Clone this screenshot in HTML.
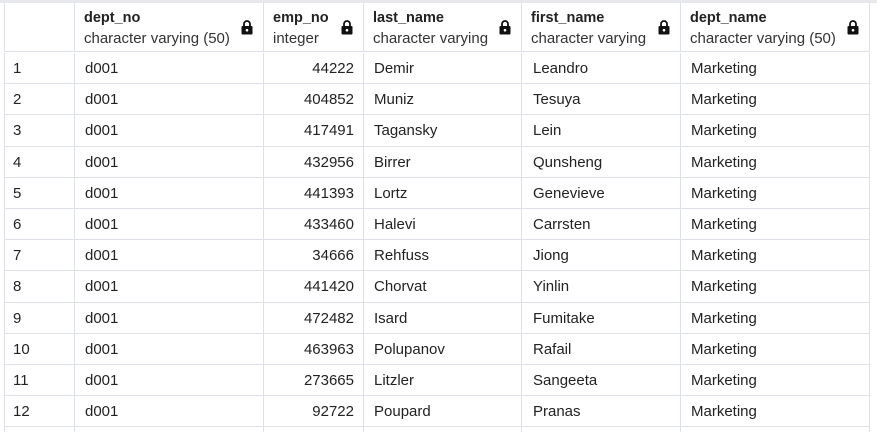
<!DOCTYPE html>
<html style="overflow:hidden;height:432px"><head><style>
body{margin:0;width:877px;height:432px;overflow:hidden;background:#fff;font-family:"Liberation Sans",sans-serif;font-size:15px;color:#222;position:relative}
.top{position:absolute;left:0;top:0;width:877px;height:3px;background:#e6e8ee}
.h{position:absolute;top:3px;height:49px;border-right:1px solid #dde0e6;border-bottom:1px solid #dde0e6;box-sizing:border-box}
.h b{position:absolute;left:9px;top:7px;font-weight:bold;font-size:14.5px;color:#222}
.h i{position:absolute;left:9px;top:27px;font-style:normal;font-size:15px;color:#333}
.lk{position:absolute;right:10px;top:17px}
.r{position:absolute;left:4px;width:866px;height:31.2px;border-bottom:1px solid #dde0e6;box-sizing:border-box}
.c{position:absolute;top:0;height:100%;border-right:1px solid #dde0e6;box-sizing:border-box;line-height:32px;white-space:nowrap}
</style></head><body>
<div class="top"></div>
<div class="h" style="left:4px;width:71px;border-left:1px solid #dde0e6"></div>
<div class="h" style="left:75px;width:189px"><b>dept_no</b><i>character varying (50)</i><svg class="lk" width="12" height="15" viewBox="0 0 12 15"><path d="M3 6V4a3 3 0 0 1 6 0v2" fill="none" stroke="#111" stroke-width="1.8"/><rect x="0.5" y="6" width="11" height="8.5" rx="1" fill="#111"/><circle cx="6" cy="10.2" r="1.3" fill="#fff"/></svg></div>
<div class="h" style="left:264px;width:100px"><b>emp_no</b><i>integer</i><svg class="lk" width="12" height="15" viewBox="0 0 12 15"><path d="M3 6V4a3 3 0 0 1 6 0v2" fill="none" stroke="#111" stroke-width="1.8"/><rect x="0.5" y="6" width="11" height="8.5" rx="1" fill="#111"/><circle cx="6" cy="10.2" r="1.3" fill="#fff"/></svg></div>
<div class="h" style="left:364px;width:158px"><b>last_name</b><i>character varying</i><svg class="lk" width="12" height="15" viewBox="0 0 12 15"><path d="M3 6V4a3 3 0 0 1 6 0v2" fill="none" stroke="#111" stroke-width="1.8"/><rect x="0.5" y="6" width="11" height="8.5" rx="1" fill="#111"/><circle cx="6" cy="10.2" r="1.3" fill="#fff"/></svg></div>
<div class="h" style="left:522px;width:159px"><b>first_name</b><i>character varying</i><svg class="lk" width="12" height="15" viewBox="0 0 12 15"><path d="M3 6V4a3 3 0 0 1 6 0v2" fill="none" stroke="#111" stroke-width="1.8"/><rect x="0.5" y="6" width="11" height="8.5" rx="1" fill="#111"/><circle cx="6" cy="10.2" r="1.3" fill="#fff"/></svg></div>
<div class="h" style="left:681px;width:189px"><b>dept_name</b><i>character varying (50)</i><svg class="lk" width="12" height="15" viewBox="0 0 12 15"><path d="M3 6V4a3 3 0 0 1 6 0v2" fill="none" stroke="#111" stroke-width="1.8"/><rect x="0.5" y="6" width="11" height="8.5" rx="1" fill="#111"/><circle cx="6" cy="10.2" r="1.3" fill="#fff"/></svg></div>
<div class="r" style="top:53px"><div class="c" style="left:0;width:71px;border-left:1px solid #dde0e6;padding-left:8px">1</div><div class="c" style="left:71px;width:189px;padding-left:10px">d001</div><div class="c" style="left:260px;width:100px;text-align:right;padding-right:9px">44222</div><div class="c" style="left:360px;width:158px;padding-left:10px">Demir</div><div class="c" style="left:518px;width:159px;padding-left:11px">Leandro</div><div class="c" style="left:677px;width:189px;padding-left:10px">Marketing</div></div>
<div class="r" style="top:84.2px"><div class="c" style="left:0;width:71px;border-left:1px solid #dde0e6;padding-left:8px">2</div><div class="c" style="left:71px;width:189px;padding-left:10px">d001</div><div class="c" style="left:260px;width:100px;text-align:right;padding-right:9px">404852</div><div class="c" style="left:360px;width:158px;padding-left:10px">Muniz</div><div class="c" style="left:518px;width:159px;padding-left:11px">Tesuya</div><div class="c" style="left:677px;width:189px;padding-left:10px">Marketing</div></div>
<div class="r" style="top:115.4px"><div class="c" style="left:0;width:71px;border-left:1px solid #dde0e6;padding-left:8px">3</div><div class="c" style="left:71px;width:189px;padding-left:10px">d001</div><div class="c" style="left:260px;width:100px;text-align:right;padding-right:9px">417491</div><div class="c" style="left:360px;width:158px;padding-left:10px">Tagansky</div><div class="c" style="left:518px;width:159px;padding-left:11px">Lein</div><div class="c" style="left:677px;width:189px;padding-left:10px">Marketing</div></div>
<div class="r" style="top:146.6px"><div class="c" style="left:0;width:71px;border-left:1px solid #dde0e6;padding-left:8px">4</div><div class="c" style="left:71px;width:189px;padding-left:10px">d001</div><div class="c" style="left:260px;width:100px;text-align:right;padding-right:9px">432956</div><div class="c" style="left:360px;width:158px;padding-left:10px">Birrer</div><div class="c" style="left:518px;width:159px;padding-left:11px">Qunsheng</div><div class="c" style="left:677px;width:189px;padding-left:10px">Marketing</div></div>
<div class="r" style="top:177.8px"><div class="c" style="left:0;width:71px;border-left:1px solid #dde0e6;padding-left:8px">5</div><div class="c" style="left:71px;width:189px;padding-left:10px">d001</div><div class="c" style="left:260px;width:100px;text-align:right;padding-right:9px">441393</div><div class="c" style="left:360px;width:158px;padding-left:10px">Lortz</div><div class="c" style="left:518px;width:159px;padding-left:11px">Genevieve</div><div class="c" style="left:677px;width:189px;padding-left:10px">Marketing</div></div>
<div class="r" style="top:209px"><div class="c" style="left:0;width:71px;border-left:1px solid #dde0e6;padding-left:8px">6</div><div class="c" style="left:71px;width:189px;padding-left:10px">d001</div><div class="c" style="left:260px;width:100px;text-align:right;padding-right:9px">433460</div><div class="c" style="left:360px;width:158px;padding-left:10px">Halevi</div><div class="c" style="left:518px;width:159px;padding-left:11px">Carrsten</div><div class="c" style="left:677px;width:189px;padding-left:10px">Marketing</div></div>
<div class="r" style="top:240.2px"><div class="c" style="left:0;width:71px;border-left:1px solid #dde0e6;padding-left:8px">7</div><div class="c" style="left:71px;width:189px;padding-left:10px">d001</div><div class="c" style="left:260px;width:100px;text-align:right;padding-right:9px">34666</div><div class="c" style="left:360px;width:158px;padding-left:10px">Rehfuss</div><div class="c" style="left:518px;width:159px;padding-left:11px">Jiong</div><div class="c" style="left:677px;width:189px;padding-left:10px">Marketing</div></div>
<div class="r" style="top:271.4px"><div class="c" style="left:0;width:71px;border-left:1px solid #dde0e6;padding-left:8px">8</div><div class="c" style="left:71px;width:189px;padding-left:10px">d001</div><div class="c" style="left:260px;width:100px;text-align:right;padding-right:9px">441420</div><div class="c" style="left:360px;width:158px;padding-left:10px">Chorvat</div><div class="c" style="left:518px;width:159px;padding-left:11px">Yinlin</div><div class="c" style="left:677px;width:189px;padding-left:10px">Marketing</div></div>
<div class="r" style="top:302.6px"><div class="c" style="left:0;width:71px;border-left:1px solid #dde0e6;padding-left:8px">9</div><div class="c" style="left:71px;width:189px;padding-left:10px">d001</div><div class="c" style="left:260px;width:100px;text-align:right;padding-right:9px">472482</div><div class="c" style="left:360px;width:158px;padding-left:10px">Isard</div><div class="c" style="left:518px;width:159px;padding-left:11px">Fumitake</div><div class="c" style="left:677px;width:189px;padding-left:10px">Marketing</div></div>
<div class="r" style="top:333.8px"><div class="c" style="left:0;width:71px;border-left:1px solid #dde0e6;padding-left:8px">10</div><div class="c" style="left:71px;width:189px;padding-left:10px">d001</div><div class="c" style="left:260px;width:100px;text-align:right;padding-right:9px">463963</div><div class="c" style="left:360px;width:158px;padding-left:10px">Polupanov</div><div class="c" style="left:518px;width:159px;padding-left:11px">Rafail</div><div class="c" style="left:677px;width:189px;padding-left:10px">Marketing</div></div>
<div class="r" style="top:365px"><div class="c" style="left:0;width:71px;border-left:1px solid #dde0e6;padding-left:8px">11</div><div class="c" style="left:71px;width:189px;padding-left:10px">d001</div><div class="c" style="left:260px;width:100px;text-align:right;padding-right:9px">273665</div><div class="c" style="left:360px;width:158px;padding-left:10px">Litzler</div><div class="c" style="left:518px;width:159px;padding-left:11px">Sangeeta</div><div class="c" style="left:677px;width:189px;padding-left:10px">Marketing</div></div>
<div class="r" style="top:396.2px"><div class="c" style="left:0;width:71px;border-left:1px solid #dde0e6;padding-left:8px">12</div><div class="c" style="left:71px;width:189px;padding-left:10px">d001</div><div class="c" style="left:260px;width:100px;text-align:right;padding-right:9px">92722</div><div class="c" style="left:360px;width:158px;padding-left:10px">Poupard</div><div class="c" style="left:518px;width:159px;padding-left:11px">Pranas</div><div class="c" style="left:677px;width:189px;padding-left:10px">Marketing</div></div>
<div class="r" style="top:427.4px;height:4.6px;border-bottom:none"><div class="c" style="left:0;width:71px;border-left:1px solid #dde0e6"></div><div class="c" style="left:71px;width:189px"></div><div class="c" style="left:260px;width:100px"></div><div class="c" style="left:360px;width:158px"></div><div class="c" style="left:518px;width:159px"></div><div class="c" style="left:677px;width:189px"></div></div>
</body></html>
